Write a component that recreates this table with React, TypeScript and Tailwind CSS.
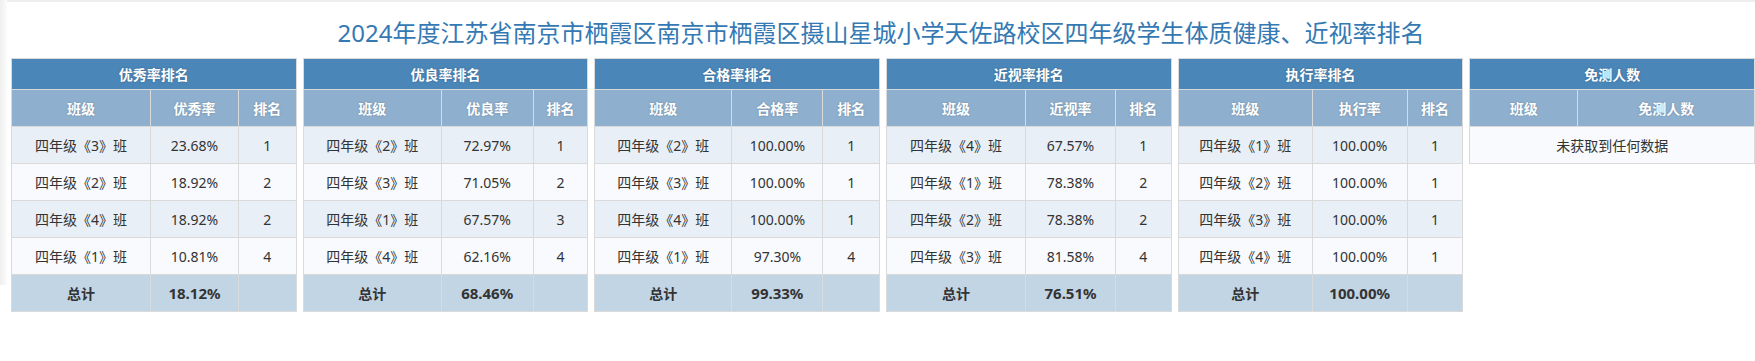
import React from "react";

type Row = { name: string; value: string; rank: number };

type RankTable = {
  title: string;
  valueLabel: string;
  widths: [number, number];
  rows: Row[];
  total: string;
};

const tables: RankTable[] = [
  {
    title: "优秀率排名",
    valueLabel: "优秀率",
    widths: [139, 88],
    rows: [
      { name: "四年级《3》班", value: "23.68%", rank: 1 },
      { name: "四年级《2》班", value: "18.92%", rank: 2 },
      { name: "四年级《4》班", value: "18.92%", rank: 2 },
      { name: "四年级《1》班", value: "10.81%", rank: 4 },
    ],
    total: "18.12%",
  },
  {
    title: "优良率排名",
    valueLabel: "优良率",
    widths: [138, 92],
    rows: [
      { name: "四年级《2》班", value: "72.97%", rank: 1 },
      { name: "四年级《3》班", value: "71.05%", rank: 2 },
      { name: "四年级《1》班", value: "67.57%", rank: 3 },
      { name: "四年级《4》班", value: "62.16%", rank: 4 },
    ],
    total: "68.46%",
  },
  {
    title: "合格率排名",
    valueLabel: "合格率",
    widths: [137, 91],
    rows: [
      { name: "四年级《2》班", value: "100.00%", rank: 1 },
      { name: "四年级《3》班", value: "100.00%", rank: 1 },
      { name: "四年级《4》班", value: "100.00%", rank: 1 },
      { name: "四年级《1》班", value: "97.30%", rank: 4 },
    ],
    total: "99.33%",
  },
  {
    title: "近视率排名",
    valueLabel: "近视率",
    widths: [139, 90],
    rows: [
      { name: "四年级《4》班", value: "67.57%", rank: 1 },
      { name: "四年级《1》班", value: "78.38%", rank: 2 },
      { name: "四年级《2》班", value: "78.38%", rank: 2 },
      { name: "四年级《3》班", value: "81.58%", rank: 4 },
    ],
    total: "76.51%",
  },
  {
    title: "执行率排名",
    valueLabel: "执行率",
    widths: [134, 95],
    rows: [
      { name: "四年级《1》班", value: "100.00%", rank: 1 },
      { name: "四年级《2》班", value: "100.00%", rank: 1 },
      { name: "四年级《3》班", value: "100.00%", rank: 1 },
      { name: "四年级《4》班", value: "100.00%", rank: 1 },
    ],
    total: "100.00%",
  },
];

const cell = "border border-[#dadada] text-center align-middle";
const headTop =
  "h-[31px] bg-[#4a86b8] font-bold text-white [text-shadow:0_0_2px_rgba(0,0,0,0.25)]";
const headSub =
  "h-[37px] bg-[#8eb0ce] font-bold text-white [text-shadow:0_0_2px_rgba(0,0,0,0.25)]";

export default function App() {
  return (
    <div className="flex min-h-[361px] w-[1755px] bg-white font-['Noto_Sans','Noto_Sans_CJK_SC',sans-serif] text-[14px] text-[#333]">
      <div className="h-[285px] w-[7px] shrink-0 bg-gradient-to-r from-[#efefef] to-[#fbfbfb]" />
      <div className="flex min-w-0 flex-1 flex-col">
        <div className="h-[2px] bg-[#eeeeee]" />
        <h1 className="mt-[15px] mb-[9px] text-center text-[24px] leading-[32px] font-normal text-[#3479b3]">
          2024年度江苏省南京市栖霞区南京市栖霞区摄山星城小学天佐路校区四年级学生体质健康、近视率排名
        </h1>
        <div className="flex items-start gap-[6px] pl-[4px]">
          {tables.map((t) => (
            <RankingTable key={t.title} table={t} />
          ))}
          <ExemptTable />
        </div>
      </div>
    </div>
  );
}

function RankingTable({ table }: { table: RankTable }) {
  return (
    <table className="min-w-0 flex-1 table-fixed border-collapse">
      <colgroup>
        <col style={{ width: table.widths[0] }} />
        <col style={{ width: table.widths[1] }} />
        <col />
      </colgroup>
      <thead>
        <tr>
          <th className={`${cell} ${headTop}`} colSpan={3}>
            {table.title}
          </th>
        </tr>
        <tr>
          <th className={`${cell} ${headSub}`}>班级</th>
          <th className={`${cell} ${headSub}`}>{table.valueLabel}</th>
          <th className={`${cell} ${headSub}`}>排名</th>
        </tr>
      </thead>
      <tbody>
        {table.rows.map((row, i) => (
          <tr
            className={i % 2 === 0 ? "bg-[#e8eff6]" : "bg-[#f8fafd]"}
            key={row.name}
          >
            <td className={`${cell} h-[37px]`}>{row.name}</td>
            <td className={`${cell} h-[37px]`}>{row.value}</td>
            <td className={`${cell} h-[37px]`}>{row.rank}</td>
          </tr>
        ))}
        <tr className="bg-[#c2d5e4] font-bold">
          <td className={`${cell} h-[37px]`}>总计</td>
          <td className={`${cell} h-[37px] text-[15px]`}>{table.total}</td>
          <td className={`${cell} h-[37px]`} />
        </tr>
      </tbody>
    </table>
  );
}

function ExemptTable() {
  return (
    <table className="min-w-0 flex-1 table-fixed border-collapse">
      <colgroup>
        <col style={{ width: 108 }} />
        <col />
      </colgroup>
      <thead>
        <tr>
          <th className={`${cell} ${headTop}`} colSpan={2}>
            免测人数
          </th>
        </tr>
        <tr>
          <th className={`${cell} ${headSub}`}>班级</th>
          <th className={`${cell} ${headSub}`}>免测人数</th>
        </tr>
      </thead>
      <tbody>
        <tr className="bg-[#f8fafd]">
          <td className={`${cell} h-[37px]`} colSpan={2}>
            未获取到任何数据
          </td>
        </tr>
      </tbody>
    </table>
  );
}
